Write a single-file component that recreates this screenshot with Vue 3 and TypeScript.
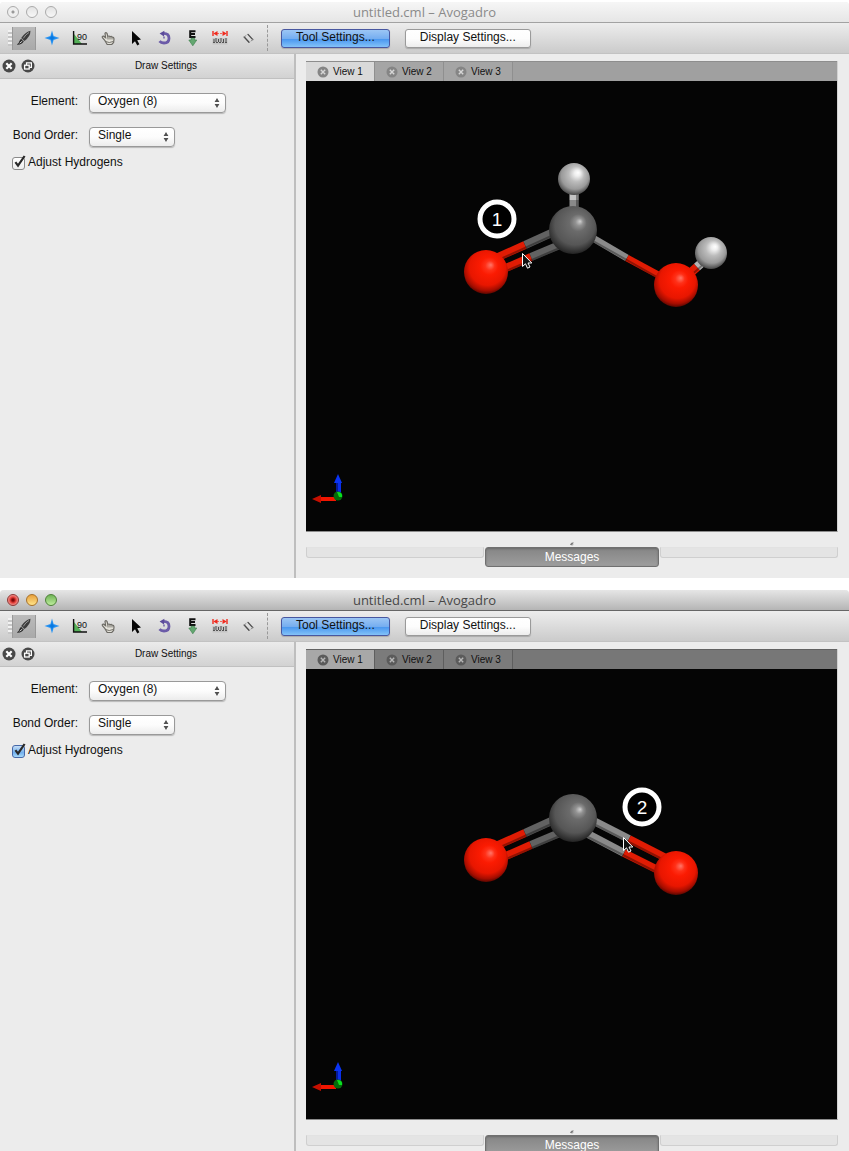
<script setup lang="ts">
interface Bond {
  x1: number
  y1: number
  mx: number
  my: number
  x2: number
  y2: number
  from: string
  to: string
  width: number
}

interface Atom {
  kind: 'hydrogen' | 'carbon' | 'oxygen'
  x: number
  y: number
  r: number
}

interface EditorWindow {
  id: string
  active: boolean
  step: { label: string; x: number; y: number }
  pointer: { x: number; y: number }
  bonds: Bond[]
  atoms: Atom[]
}

const red = '#e01c04'
const gray = '#626262'
const light = '#8a8a8a'

const leftBonds: Bond[] = [
  { x1: 190, y1: 177, mx: 219, my: 164, x2: 252, y2: 149, from: red, to: gray, width: 8 },
  { x1: 193, y1: 190, mx: 225, my: 176, x2: 256, y2: 163, from: red, to: gray, width: 8 },
]

const carbon: Atom = { kind: 'carbon', x: 267, y: 149, r: 24 }
const oxygens: Atom[] = [
  { kind: 'oxygen', x: 180, y: 191, r: 22 },
  { kind: 'oxygen', x: 370, y: 204, r: 22 },
]

const windows: EditorWindow[] = [
  {
    id: 'first',
    active: false,
    step: { label: '1', x: 191, y: 138 },
    pointer: { x: 216, y: 172 },
    bonds: [
      ...leftBonds,
      { x1: 280, y1: 153, mx: 321, my: 177, x2: 358, y2: 197, from: light, to: red, width: 7 },
      { x1: 382, y1: 194, mx: 391, my: 186, x2: 400, y2: 178, from: red, to: '#b4b4b4', width: 9 },
      { x1: 268, y1: 106, mx: 268, my: 119, x2: 268, y2: 128, from: '#c4c4c4', to: light, width: 9 },
    ],
    atoms: [
      { kind: 'hydrogen', x: 268, y: 98, r: 16 },
      carbon,
      { kind: 'hydrogen', x: 405, y: 172, r: 16 },
      ...oxygens,
    ],
  },
  {
    id: 'second',
    active: true,
    step: { label: '2', x: 336, y: 138 },
    pointer: { x: 317, y: 168 },
    bonds: [
      ...leftBonds,
      { x1: 280, y1: 148, mx: 323, my: 170, x2: 360, y2: 189, from: light, to: red, width: 8 },
      { x1: 280, y1: 164, mx: 318, my: 184, x2: 354, y2: 202, from: light, to: red, width: 8 },
    ],
    atoms: [carbon, ...oxygens],
  },
]

const tools = ['Draw', 'Navigate', 'Measure', 'Manipulate', 'Select', 'Rotate', 'Optimize', 'Ruler', 'Align']
const views = ['View 1', 'View 2', 'View 3']

// Shadow runs along the underside of a slanted bond, or the side of an upright one.
const shade = (bond: Bond) => {
  const upright = bond.x1 === bond.x2
  const dx = upright ? 3 : 0
  const dy = upright ? 0 : 3
  return { x1: bond.x1 + dx, y1: bond.y1 + dy, x2: bond.x2 + dx, y2: bond.y2 + dy }
}
</script>

<template>
  <div class="page">
    <section v-for="win in windows" :key="win.id" class="window" :class="{ active: win.active }">
      <header class="titlebar">
        <div class="lights">
          <button class="light close" aria-label="Close window"></button>
          <button class="light minimize" aria-label="Minimize window"></button>
          <button class="light expand" aria-label="Zoom window"></button>
        </div>
        <h1>untitled.cml – Avogadro</h1>
        <div></div>
      </header>

      <nav class="toolbar">
        <span class="grip"></span>
        <div class="tools">
          <button v-for="(tool, i) in tools" :key="tool" class="tool" :class="{ chosen: i === 0 }" :aria-label="tool">
            <svg viewBox="0 0 16 16" width="16" height="16" aria-hidden="true">
              <g v-if="tool === 'Draw'">
                <path d="M14.5 0.8 Q10 1.5 5.2 8 L8.5 11 Q14.5 6.5 14.5 0.8Z" fill="#3c3c3c" />
                <path d="M13 2.5 Q9.5 4.5 7.3 8.4" stroke="#999" fill="none" />
                <path d="M5 8.8 L7.8 11.3 Q6 15 0.8 14.6 Q3.2 13 3.4 11Z" fill="#2d2d2d" />
                <path d="M3.6 13.2 L6.4 11" stroke="#ccc" />
              </g>
              <g v-else-if="tool === 'Navigate'">
                <path d="M8 0.5 L9.6 6 L15.5 8 L9.6 10 L8 15.5 L6.4 10 L0.5 8 L6.4 6Z" fill="#2b94f2" />
                <path d="M8 4 L9 7 L12 8 L9 9 L8 12 L7 9 L4 8 L7 7Z" fill="#0878e0" />
              </g>
              <g v-else-if="tool === 'Measure'">
                <path d="M2 14 V4 L10 14Z" fill="#54b058" />
                <path d="M1.6 1 V14 H15" fill="none" stroke="#111" stroke-width="1.4" />
                <text x="5" y="10" font-size="9" fill="#111">90</text>
              </g>
              <g v-else-if="tool === 'Manipulate'">
                <path d="M4.8 10.4 L2.4 7.6 Q1.8 6 3.6 6.2 L5.6 7.6 L5 3.4 Q5.8 2 7 3.4 L7.8 6.6 Q9 5.4 10 6.7 Q11.4 5.6 12 7.2 Q13.8 6.8 14 9 L13.6 12.4 L11.8 14.5 H7.2Z" fill="#e4e2da" stroke="#6d6b65" stroke-width="1.2" />
                <path d="M8 7 V9.5 M10 7 V9.5 M12 7.5 V9.5 M6 11.6 Q9 13.6 13 11.5" fill="none" stroke="#77756e" />
              </g>
              <path v-else-if="tool === 'Select'" d="M4 1 V14 L7 11.2 L9.3 15.5 L11.4 14.3 L9.2 10.2 L13 9.6Z" fill="#070707" />
              <g v-else-if="tool === 'Rotate'">
                <path d="M7.5 3.4 Q13 3.4 13 8.2 Q13 13 8 13 Q5 13 3.5 11.2" fill="none" stroke="#6b5ba8" stroke-width="2.8" />
                <path d="M8.4 0.8 L8 6.6 L3.6 3.4Z" fill="#5b4a9a" />
                <path d="M8 6.5 V8.6" stroke="#6b5ba8" stroke-width="1.4" />
              </g>
              <g v-else-if="tool === 'Optimize'">
                <path d="M11.5 1.3 H6.2 V7 H11.5 M6.2 4.1 H11" fill="none" stroke="#111" stroke-width="2" />
                <path d="M7 8.2 H10.6 V10 H12.8 L8.8 15.8 L4.8 10 H7Z" fill="#64a771" stroke="#397e48" stroke-width="0.6" />
              </g>
              <g v-else-if="tool === 'Ruler'">
                <path d="M1 1 V6 M15 1 V6" stroke="#f02a1e" stroke-width="1.4" />
                <path d="M2 3.5 H14" stroke="#f0685e" stroke-dasharray="2 1" />
                <path d="M1.3 3.5 L5.5 1 V6Z M14.7 3.5 L10.5 1 V6Z" fill="#f02a1e" />
                <rect x="0.5" y="8" width="15" height="6.5" fill="#c4c4c4" />
                <path d="M2 9 V12 M4 8 V12 M6.5 9 V12 M9 8 V12 M11.5 9 V12 M14 8 V12" stroke="#4c4c4c" />
                <path d="M1 12.5 H15" stroke="#555" stroke-dasharray="2 1" />
              </g>
              <g v-else fill="none" stroke="#4c4c4c" stroke-linecap="round">
                <path d="M4.2 7 L9 12.2 M8 4.4 L12.8 9.6" stroke-width="1.4" />
                <path d="M4.2 7 L6 5.6 M11 11 L12.8 9.6" stroke="#8c8c8c" />
              </g>
            </svg>
          </button>
        </div>
        <span class="divider"></span>
        <button class="push primary">Tool Settings...</button>
        <button class="push">Display Settings...</button>
      </nav>

      <div class="body">
        <aside class="dock">
          <header class="dock-head">
            <button class="round" aria-label="Close panel">
              <svg viewBox="0 0 14 14" width="14" height="14" aria-hidden="true">
                <circle cx="7" cy="7" r="6.5" fill="#484848" />
                <path d="M4.3 4.3 L9.7 9.7 M9.7 4.3 L4.3 9.7" stroke="#fff" stroke-width="2.2" />
              </svg>
            </button>
            <button class="round" aria-label="Float panel">
              <svg viewBox="0 0 14 14" width="14" height="14" aria-hidden="true">
                <circle cx="7" cy="7" r="6.5" fill="#484848" />
                <path d="M5.5 6 V3.8 H10.4 V8.4 H8.6" fill="none" stroke="#fff" stroke-width="1.2" />
                <rect x="3.6" y="6.2" width="4.6" height="3.8" fill="none" stroke="#fff" stroke-width="1.3" />
              </svg>
            </button>
            <h2>Draw Settings</h2>
          </header>
          <form class="form" @submit.prevent>
            <label :for="`${win.id}-element`">Element:</label>
            <span class="picker wide">
              <select :id="`${win.id}-element`"><option>Oxygen (8)</option></select>
              <svg viewBox="0 0 6 10" width="6" height="10" aria-hidden="true"><path d="M3 0 L5.4 4 H0.6Z M3 10 L5.4 6 H0.6Z" fill="#505050" /></svg>
            </span>
            <label :for="`${win.id}-order`">Bond Order:</label>
            <span class="picker">
              <select :id="`${win.id}-order`"><option>Single</option></select>
              <svg viewBox="0 0 6 10" width="6" height="10" aria-hidden="true"><path d="M3 0 L5.4 4 H0.6Z M3 10 L5.4 6 H0.6Z" fill="#505050" /></svg>
            </span>
          </form>
          <label class="check">
            <span class="tick">
              <input type="checkbox" checked />
              <svg viewBox="0 0 14 16" width="14" height="16" aria-hidden="true"><path d="M3.4 8.2 L6 11.6 L12.6 2" fill="none" stroke="#292929" stroke-width="2.2" /></svg>
            </span>
            Adjust Hydrogens
          </label>
        </aside>

        <main class="main">
          <div class="frame">
            <div class="tabs" role="tablist">
              <button v-for="(view, i) in views" :key="view" class="tab" role="tab" :aria-selected="i === 0">
                <svg viewBox="0 0 12 12" width="12" height="12" aria-hidden="true">
                  <circle cx="6" cy="6" r="5.5" class="dot" />
                  <path d="M3.8 3.8 L8.2 8.2 M8.2 3.8 L3.8 8.2" class="cross" />
                </svg>
                {{ view }}
              </button>
            </div>
            <svg class="scene" viewBox="0 0 531 450" role="img" aria-label="Molecule">
              <defs>
                <radialGradient :id="`${win.id}-oxygen`" cx="0.5" cy="0.42" r="0.6" fx="0.61" fy="0.34">
                  <stop offset="0" stop-color="#ff7668" />
                  <stop offset="0.18" stop-color="#ff3018" />
                  <stop offset="0.34" stop-color="#fb1b02" />
                  <stop offset="0.68" stop-color="#e81600" />
                  <stop offset="0.86" stop-color="#a60d00" />
                  <stop offset="1" stop-color="#450500" />
                </radialGradient>
                <radialGradient :id="`${win.id}-carbon`" cx="0.5" cy="0.42" r="0.6" fx="0.65" fy="0.32">
                  <stop offset="0" stop-color="#d0d0d0" />
                  <stop offset="0.13" stop-color="#929292" />
                  <stop offset="0.3" stop-color="#6b6b6b" />
                  <stop offset="0.7" stop-color="#565656" />
                  <stop offset="1" stop-color="#1e1e1e" />
                </radialGradient>
                <radialGradient :id="`${win.id}-hydrogen`" cx="0.5" cy="0.42" r="0.6" fx="0.63" fy="0.3">
                  <stop offset="0" stop-color="#ffffff" />
                  <stop offset="0.16" stop-color="#eeeeee" />
                  <stop offset="0.4" stop-color="#bcbcbc" />
                  <stop offset="0.72" stop-color="#9a9a9a" />
                  <stop offset="1" stop-color="#3c3c3c" />
                </radialGradient>
              </defs>

              <g v-for="(bond, i) in win.bonds" :key="`bond-${i}`">
                <line :x1="bond.x1" :y1="bond.y1" :x2="bond.mx" :y2="bond.my" :stroke="bond.from" :stroke-width="bond.width" />
                <line :x1="bond.mx" :y1="bond.my" :x2="bond.x2" :y2="bond.y2" :stroke="bond.to" :stroke-width="bond.width" />
                <line v-bind="shade(bond)" stroke="#000" stroke-opacity="0.35" stroke-width="2" />
              </g>
              <circle v-for="(atom, i) in win.atoms" :key="`atom-${i}`" :cx="atom.x" :cy="atom.y" :r="atom.r" :fill="`url(#${win.id}-${atom.kind})`" />

              <g>
                <path d="M30 400 H35 V413 H30Z" fill="#0b2fe8" />
                <path d="M30 400 H32 V413 H30Z" fill="#061a96" />
                <path d="M32 393 L36 402 H28Z" fill="#0a34f4" />
                <path d="M14 416 H30 V420 H14Z" fill="#f21500" />
                <path d="M6 418 L15 414 V422Z" fill="#c50f00" />
                <circle cx="32" cy="415" r="4.5" fill="#056b0a" />
                <path d="M31 411 Q37 411 36 416 L33 416Z" fill="#09e020" />
              </g>

              <circle :cx="win.step.x" :cy="win.step.y" r="17" fill="#000" stroke="#fff" stroke-width="5" />
              <text class="step" :x="win.step.x" :y="win.step.y + 7" text-anchor="middle">{{ win.step.label }}</text>
              <path :transform="`translate(${win.pointer.x} ${win.pointer.y})`" d="M0.5 0.5 V13.5 L3.5 10.8 L5.5 15.2 L8 14 L6 10 H9.8Z" fill="#111" stroke="#fff" />
            </svg>
          </div>
          <div class="splitter"><svg viewBox="0 0 4 4" width="4" height="4" aria-hidden="true"><circle cx="2" cy="2" r="1.5" fill="#aaa" /><path d="M0.5 3 L3 0.5" stroke="#555" /></svg></div>
          <footer class="footer">
            <span class="groove"></span>
            <button class="messages">Messages</button>
            <span class="groove"></span>
          </footer>
        </main>
      </div>
    </section>
  </div>
</template>

<style>
body {
  margin: 0;
  background: #fff;
}
</style>

<style scoped>
* {
  box-sizing: border-box;
}

.page {
  display: flex;
  flex-direction: column;
  gap: 12px;
  height: 100vh;
  padding-top: 2px;
  overflow: hidden;
  font-family: "Liberation Sans", Arial, sans-serif;
  font-size: 12px;
  color: #111;
}

button,
select {
  margin: 0;
  padding: 0;
  border: 0;
  font: inherit;
  color: inherit;
}

.window {
  flex: none;
  overflow: hidden;
  border-radius: 4px 4px 0 0;
  background: #ececec;
}

.titlebar {
  display: grid;
  grid-template-columns: 1fr auto 1fr;
  align-items: center;
  height: 21px;
  padding: 0 7px;
  background: linear-gradient(#f6f6f6, #e6e6e6);
  border-bottom: 1px solid #a2a2a2;
}

.active .titlebar {
  background: linear-gradient(#e6e6e6, #b5b5b5);
  border-bottom-color: #666;
}

.titlebar h1 {
  margin: 0;
  font: 13px/20px "Open Sans", "Noto Sans", sans-serif;
  color: #8a8a8a;
}

.active .titlebar h1 {
  color: #474747;
}

.lights {
  display: flex;
  gap: 7px;
}

.light {
  width: 12px;
  height: 12px;
  border: 1px solid #aaa;
  border-radius: 50%;
  background: linear-gradient(#e3e3e3, #f7f7f7);
}

.light.close {
  background: radial-gradient(circle, #999 0 1px, #eee 2px);
}

.active .light.close {
  border-color: #8e3432;
  background: radial-gradient(circle, #7d0808 0 1px, #e9443e 3px, #ee9590 5px);
}

.active .light.minimize {
  border-color: #a77027;
  background: linear-gradient(#e8a03c, #ffe48a);
}

.active .light.expand {
  border-color: #4d8038;
  background: linear-gradient(#70b456, #bdec9d);
}

.toolbar {
  display: flex;
  align-items: center;
  height: 31px;
  padding: 0 8px;
  background: linear-gradient(#ededed, #cbcbcb);
  border-bottom: 1px solid #c2c2c2;
}

.grip {
  width: 4px;
  height: 16px;
  background: repeating-linear-gradient(#f2f2f2 0 2px, #c6c6c6 2px 4px);
}

.tools {
  display: flex;
  gap: 4px;
}

.tool {
  display: grid;
  place-items: center;
  width: 24px;
  height: 23px;
  background: none;
}

.tool.chosen {
  background: linear-gradient(#bbb, #a9a9a9);
  box-shadow: inset 1px 0 #999, inset -1px 0 #999;
}

.divider {
  height: 26px;
  margin: 0 13px 0 7px;
  border-left: 1px dashed #999;
}

.push {
  height: 19px;
  margin-right: 15px;
  padding: 0 14px 3px;
  border: 1px solid #9a9a9a;
  border-radius: 3px;
  background: linear-gradient(#fff, #fdfdfd 50%, #ededed);
  box-shadow: 0 1px 1px #aaa;
  line-height: 14px;
}

.push.primary {
  border-color: #4857a0;
  background: linear-gradient(#9cc6f5, #76aef0 50%, #4b98f0 55%, #83c2f8);
}

.body {
  display: flex;
}

.dock {
  flex: none;
  width: 296px;
  border-right: 2px solid #bebebe;
}

.dock-head {
  display: flex;
  align-items: center;
  gap: 5px;
  height: 25px;
  padding: 0 2px;
  background: linear-gradient(#ebebeb, #d2d2d2);
  border-bottom: 1px solid #c0c0c0;
}

.dock-head h2 {
  flex: 1;
  margin: 0;
  font-size: 10px;
  font-weight: normal;
  line-height: 14px;
  text-align: center;
}

.round {
  width: 14px;
  height: 14px;
  border-radius: 50%;
  background: none;
}

.round svg {
  display: block;
}

.form {
  display: grid;
  grid-template-columns: 66px auto;
  justify-content: start;
  gap: 14px 11px;
  padding: 14px 12px 0;
}

.form label {
  line-height: 16px;
  text-align: right;
  white-space: nowrap;
}

.picker {
  display: grid;
  align-items: center;
  width: 86px;
  height: 20px;
}

.picker.wide {
  width: 137px;
}

.picker select,
.picker svg {
  grid-area: 1 / 1;
}

.picker select {
  appearance: none;
  width: 100%;
  height: 20px;
  padding: 0 20px 4px 8px;
  border: 1px solid #999;
  border-radius: 4px;
  background: linear-gradient(#fff, #fcfcfc 50%, #ececec);
  box-shadow: 0 1px 1px #b8b8b8;
}

.picker svg {
  justify-self: end;
  margin-right: 6px;
  pointer-events: none;
}

.check {
  display: flex;
  align-items: center;
  gap: 2px;
  padding: 7px 12px;
  line-height: 16px;
}

.tick {
  display: grid;
  align-items: end;
  width: 14px;
  height: 16px;
}

.tick input,
.tick svg {
  grid-area: 1 / 1;
}

.tick input {
  appearance: none;
  width: 13px;
  height: 13px;
  margin: 0;
  border: 1px solid #8a8a8a;
  border-radius: 3px;
  background: linear-gradient(#fff, #eee);
}

.active .tick input {
  border-color: #4668a8;
  background: linear-gradient(#c6def6, #72b0ee 60%, #a8dafb);
}

.tick svg {
  pointer-events: none;
}

.main {
  flex: 1;
  min-width: 0;
  padding: 7px 11px 11px 10px;
}

.frame {
  border-right: 1px solid #d2d2d2;
  border-bottom: 1px solid #8c8c8c;
}

.tabs {
  display: flex;
  height: 20px;
  background: #a0a0a0;
  border-top: 1px solid #8d8d8d;
}

.tab {
  display: flex;
  align-items: center;
  gap: 4px;
  width: 69px;
  padding-left: 11px;
  background: #a5a5a5;
  border-right: 1px solid #8f8f8f;
  font-size: 10px;
  white-space: nowrap;
}

.tab[aria-selected="true"] {
  background: #d9d9d9;
}

.dot {
  fill: #858585;
}

.cross {
  stroke: #d6d6d6;
  stroke-width: 1.4;
}

.active .tabs {
  background: #777;
  border-top-color: #626262;
}

.active .tab {
  background: #7b7b7b;
  border-right-color: #5e5e5e;
}

.active .tab[aria-selected="true"] {
  background: #a8a8a8;
}

.active .dot {
  fill: #5b5b5b;
}

.active .cross {
  stroke: #b6b6b6;
}

.scene {
  display: block;
  width: 100%;
  height: auto;
  background: #050505;
}

.step {
  font-size: 19px;
  fill: #fff;
}

.splitter {
  display: grid;
  place-items: center;
  height: 15px;
  padding-top: 8px;
}

.footer {
  display: flex;
  gap: 1px;
  height: 20px;
}

.groove {
  flex: 1;
  height: 11px;
  background: #e4e4e4;
  border: 1px solid #cfcfcf;
  border-top-color: #e2e2e2;
  border-radius: 0 0 3px 3px;
}

.messages {
  width: 174px;
  padding-bottom: 1px;
  border: 1px solid #707070;
  border-radius: 3px;
  background: linear-gradient(#858585, #9d9d9d);
  box-shadow: inset 0 1px 2px #6c6c6c;
  color: #fff;
}
</style>
